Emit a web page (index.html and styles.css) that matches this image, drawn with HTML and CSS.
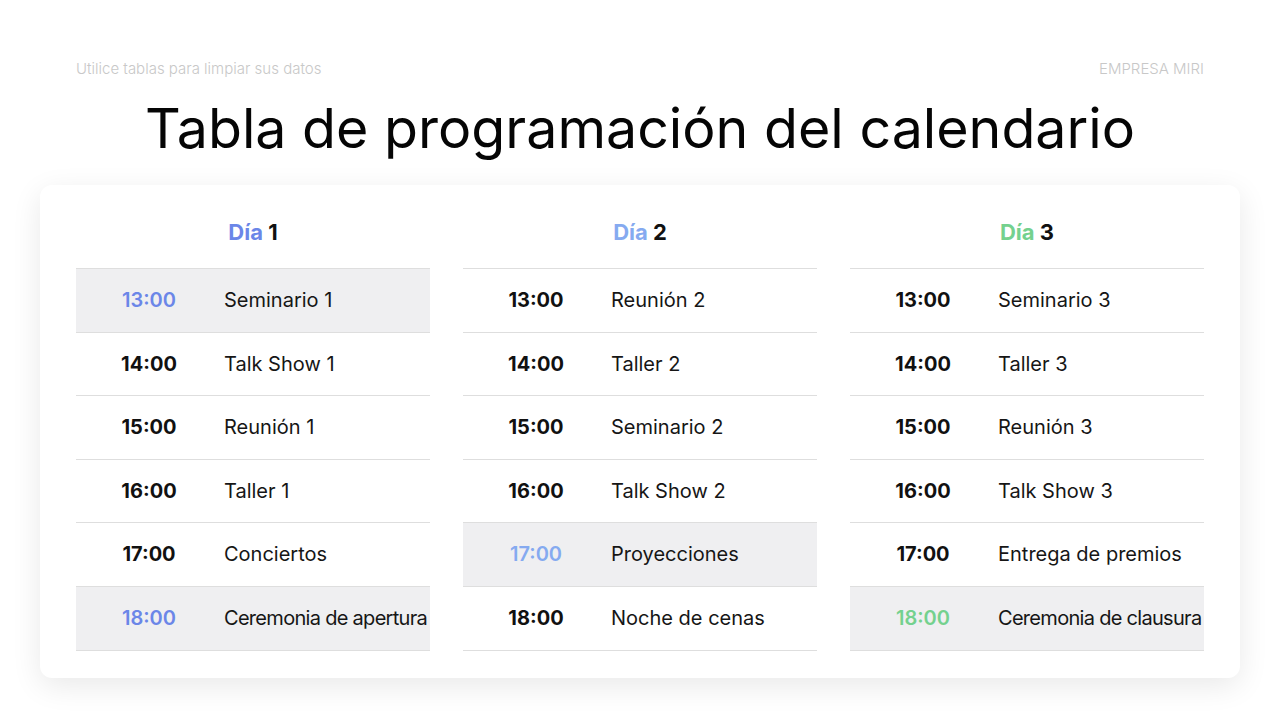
FILE: index.html
```html
<!DOCTYPE html>
<html lang="es">
<head>
<meta charset="utf-8">
<title>Tabla de programación del calendario</title>
<link rel="stylesheet" href="styles.css">
</head>
<body>
<div class="page">
  <div class="topbar">
    <span>Utilice tablas para limpiar sus datos</span>
    <span>EMPRESA MIRI</span>
  </div>
  <h1 class="title">Tabla de programación del calendario</h1>
  <div class="card">
    <div class="col">
      <div class="day"><span><span class="c1">Día</span> 1</span></div>
      <div class="row hl"><span class="time c1">13:00</span><span class="ev">Seminario 1</span></div>
      <div class="row"><span class="time">14:00</span><span class="ev">Talk Show 1</span></div>
      <div class="row"><span class="time">15:00</span><span class="ev">Reunión 1</span></div>
      <div class="row"><span class="time">16:00</span><span class="ev">Taller 1</span></div>
      <div class="row"><span class="time">17:00</span><span class="ev">Conciertos</span></div>
      <div class="row hl"><span class="time c1">18:00</span><span class="ev tight">Ceremonia de apertura</span></div>
    </div>
    <div class="col">
      <div class="day"><span><span class="c2">Día</span> 2</span></div>
      <div class="row"><span class="time">13:00</span><span class="ev">Reunión 2</span></div>
      <div class="row"><span class="time">14:00</span><span class="ev">Taller 2</span></div>
      <div class="row"><span class="time">15:00</span><span class="ev">Seminario 2</span></div>
      <div class="row"><span class="time">16:00</span><span class="ev">Talk Show 2</span></div>
      <div class="row hl"><span class="time c2">17:00</span><span class="ev">Proyecciones</span></div>
      <div class="row"><span class="time">18:00</span><span class="ev">Noche de cenas</span></div>
    </div>
    <div class="col">
      <div class="day"><span><span class="c3">Día</span> 3</span></div>
      <div class="row"><span class="time">13:00</span><span class="ev">Seminario 3</span></div>
      <div class="row"><span class="time">14:00</span><span class="ev">Taller 3</span></div>
      <div class="row"><span class="time">15:00</span><span class="ev">Reunión 3</span></div>
      <div class="row"><span class="time">16:00</span><span class="ev">Talk Show 3</span></div>
      <div class="row"><span class="time">17:00</span><span class="ev">Entrega de premios</span></div>
      <div class="row hl"><span class="time c3">18:00</span><span class="ev tight">Ceremonia de clausura</span></div>
    </div>
  </div>
</div>
</body>
</html>
```
FILE: styles.css
```css
* { box-sizing: border-box; }
html, body { margin: 0; padding: 0; background: #ffffff; }
body { font-family: Inter, "Noto Sans", sans-serif; color: #111; }
.page { width: 1280px; height: 720px; overflow: hidden; }
.topbar {
  display: flex;
  justify-content: space-between;
  padding: 59px 76px 0 76px;
  font-size: 15px;
  font-weight: 300;
  color: #c8c8c8;
  line-height: 20px;
}
.title {
  margin: 14px 0 0 0;
  text-align: center;
  font-weight: 400;
  font-size: 55.5px;
  line-height: 70px;
  color: #050505;
  letter-spacing: 0;
}
.card {
  margin: 22px 40px 0 40px;
  height: 493px;
  background: #fff;
  border-radius: 12px;
  box-shadow: 0 8px 30px rgba(0,0,0,0.09);
  padding: 12px 36px 0 36px;
  display: grid;
  grid-template-columns: repeat(3, minmax(0, 1fr));
  column-gap: 33px;
}
.col { display: flex; flex-direction: column; min-width: 0; }
.day {
  height: 71px;
  display: flex;
  align-items: center;
  justify-content: center;
  font-size: 22px;
  font-weight: 700;
  color: #111;
  padding-bottom: 2px;
}
.c1 { color: #6b86e8; }
.c2 { color: #85aaf0; }
.c3 { color: #74d18e; }
.row {
  height: 63.5px;
  border-top: 1.5px solid #dedede;
  display: flex;
  align-items: center;
  font-size: 20px;
}
.row:last-child { border-bottom: 1.5px solid #dedede; height: 65px; }
.row.hl { background: #efeff1; }
.time {
  width: 146px;
  text-align: center;
  font-weight: 700;
  flex: none;
}
.time.c1, .time.c2, .time.c3 { font-weight: 600; }
.ev {
  padding-left: 2px;
  font-weight: 400;
  color: #161616;
  white-space: nowrap;
}
.ev.tight { letter-spacing: -0.7px; }
```
